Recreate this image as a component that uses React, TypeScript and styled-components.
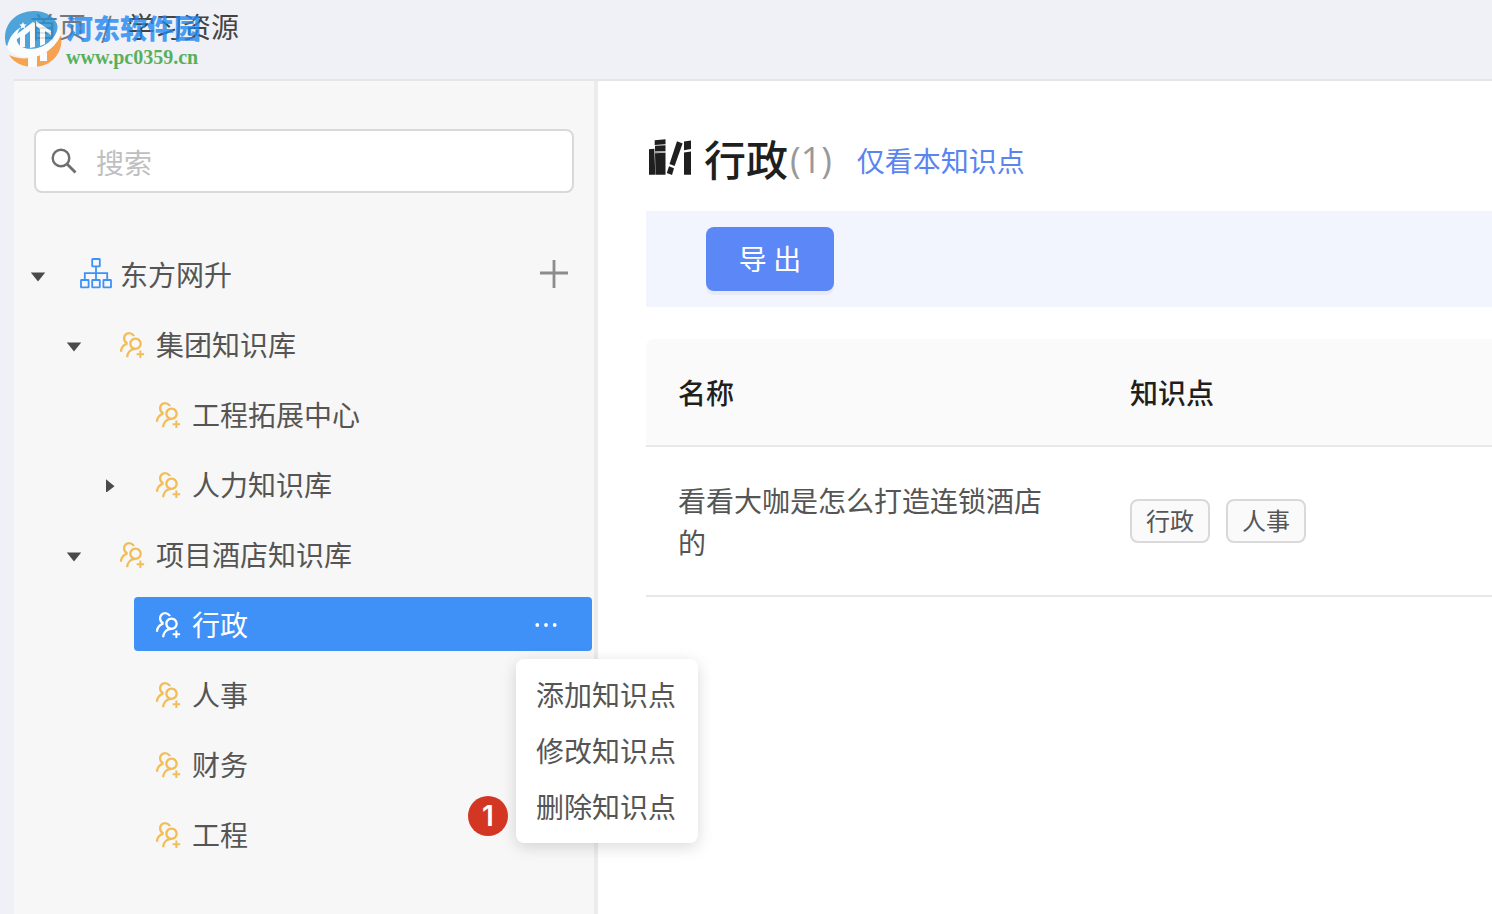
import React from 'react';
import styled, { createGlobalStyle, css } from 'styled-components';
import { AiOutlineUsergroupAdd } from 'react-icons/ai';

const GlobalStyle = createGlobalStyle`
  *, *::before, *::after { box-sizing: border-box; }
  body {
    margin: 0;
    background: #eff1f6;
    color: #555;
    font: 400 28px/42px "Noto Sans CJK SC", "Noto Sans", sans-serif;
    overflow: hidden;
  }
  button, input { font: inherit; color: inherit; }
  button { border: 0; background: none; padding: 0; cursor: pointer; }
  ul, ol { list-style: none; margin: 0; padding: 0; }
  a { color: inherit; text-decoration: none; }
  h1 { margin: 0; }
`;

const Page = styled.div`
  position: relative;
  display: flex;
  flex-direction: column;
  min-height: 100vh;
  padding-left: 14px;
`;

const Header = styled.header`
  height: 81px;
  padding: 5px 16px 0;
  border-bottom: 2px solid #e4e5e9;
`;

const Crumbs = styled.ol`
  display: flex;
  gap: 15px;
  color: #444;
`;

const Crumb = styled.li<{ $muted?: boolean }>`
  color: ${(p) => (p.$muted ? '#777' : 'inherit')};
`;

const Watermark = styled.div`
  position: absolute;
  top: 9px;
  left: 4px;
  display: flex;
  gap: 2px;
  pointer-events: none;
  opacity: 0.8;
`;

const WatermarkText = styled.div`
  display: flex;
  flex-direction: column;
`;

const WatermarkName = styled.span`
  color: #1f88f0;
  font-size: 27px;
  font-weight: 900;
  line-height: 38px;
`;

const WatermarkUrl = styled.span`
  color: #34a034;
  font: 700 20px/20px "Liberation Serif", serif;
`;

const Body = styled.div`
  display: flex;
  flex: 1;
`;

const Sidebar = styled.aside`
  flex: 0 0 584px;
  padding: 48px 0 40px;
  background: #f7f7f7;
  border-right: 4px solid #ececec;
`;

const SearchBox = styled.label`
  display: flex;
  align-items: center;
  gap: 18px;
  height: 64px;
  margin: 0 20px 54px;
  padding: 0 14px;
  background: #fff;
  border: 2px solid #d9d9d9;
  border-radius: 8px;
`;

const SearchInput = styled.input`
  flex: 1;
  min-width: 0;
  padding: 2px 0 0;
  border: 0;
  outline: 0;
  background: none;
  &::placeholder { color: #bfbfbf; opacity: 1; }
`;

const Tree = styled.ul`
  display: flex;
  flex-direction: column;
  gap: 16px;
  padding-left: 12px;
`;

const Branch = styled(Tree)`
  margin-top: 16px;
  padding-left: 36px;
`;

const Row = styled.div`
  display: flex;
  align-items: center;
  gap: 12px;
  padding-right: 2px;
`;

const Caret = styled.button`
  display: flex;
  flex: 0 0 24px;
  align-items: center;
  justify-content: center;
  height: 24px;
`;

const CaretSpace = styled.span`
  flex: 0 0 24px;
`;

const Node = styled.div<{ $selected?: boolean }>`
  position: relative;
  display: flex;
  flex: 1;
  align-items: center;
  gap: 8px;
  height: 54px;
  padding: 0 24px 0 18px;
  border-radius: 4px;
  ${(p) => p.$selected && css`
    padding-right: 32px;
    color: #fff;
    background: #3f90f7;
  `}
`;

const NodeIcon = styled.span<{ $color: string }>`
  display: flex;
  flex: 0 0 32px;
  justify-content: center;
  color: ${(p) => p.$color};
`;

const NodeName = styled.span`
  flex: 1;
`;

const IconButton = styled.button`
  display: flex;
  align-items: center;
  justify-content: center;
  width: 28px;
  height: 28px;
`;

const Menu = styled.ul`
  position: absolute;
  top: 62px;
  right: -106px;
  z-index: 2;
  padding: 8px 0;
  color: #555;
  background: #fff;
  border-radius: 8px;
  box-shadow: 0 4px 16px rgba(0, 0, 0, 0.15);
`;

const MenuItem = styled.button`
  display: block;
  padding: 6px 22px 8px 20px;
`;

const StepBadge = styled.span`
  position: absolute;
  right: 190px;
  bottom: 7px;
  width: 40px;
  height: 40px;
  border-radius: 50%;
  color: #fff;
  background: #d33724;
  font-family: Inter, sans-serif;
  font-weight: 600;
  line-height: 40px;
  text-align: center;
`;

const Main = styled.main`
  flex: 1;
  min-width: 0;
  padding: 48px 0 40px 48px;
  background: #fff;
`;

const TitleRow = styled.div`
  display: flex;
  align-items: center;
  height: 64px;
  margin-bottom: 18px;
`;

const Title = styled.h1`
  margin: 0 2px 0 10px;
  padding-bottom: 6px;
  color: #1f1f1f;
  font-size: 42px;
  font-weight: 500;
  line-height: 58px;
`;

const Count = styled.span`
  margin-right: 25px;
  padding-bottom: 2px;
  color: #999;
  font-family: "Open Sans", sans-serif;
  font-size: 36px;
`;

const OnlyLink = styled.a`
  padding-bottom: 2px;
  color: #5b84f0;
`;

const Toolbar = styled.div`
  display: flex;
  margin-bottom: 32px;
  padding: 16px 60px;
  background: #f2f5fd;
`;

const PrimaryButton = styled.button`
  min-width: 128px;
  padding: 10px 32px 12px;
  color: #fff;
  background: #5b87f7;
  border-radius: 8px;
  box-shadow: 0 4px 0 rgba(0, 0, 0, 0.04);
`;

const Table = styled.table`
  width: 100%;
  table-layout: fixed;
  border-collapse: separate;
  border-spacing: 0;
`;

const Th = styled.th<{ $name?: boolean }>`
  width: ${(p) => (p.$name ? '452px' : 'auto')};
  padding: 32px;
  color: #1f1f1f;
  background: #fafafa;
  border-bottom: 2px solid #e8e8e8;
  font-weight: 500;
  text-align: left;
  &:first-child { border-top-left-radius: 8px; }
`;

const Td = styled.td`
  padding: 32px;
  border-bottom: 2px solid #e8e8e8;
`;

const Tags = styled.div`
  display: flex;
  gap: 16px;
`;

const Tag = styled.span`
  padding: 0 14px 2px;
  background: #fafafa;
  border: 2px solid #d9d9d9;
  border-radius: 8px;
  font-size: 24px;
  line-height: 38px;
`;

const SearchIcon = () => (
  <svg width="28" height="28" viewBox="0 0 28 28" fill="none" stroke="#6e6e6e" strokeWidth="2.4" aria-hidden="true">
    <circle cx="11" cy="11" r="8.300" />
    <path d="M17 17 25.500 25.500" strokeWidth="2.800" />
  </svg>
);

const OrgIcon = () => (
  <svg width="32" height="32" viewBox="0 0 32 32" fill="none" stroke="currentColor" strokeWidth="1.8" aria-hidden="true">
    <rect x="12.200" y="1" width="7.600" height="7.400" rx=".5" />
    <rect x="1" y="22" width="7.600" height="7.400" rx=".5" />
    <rect x="12.200" y="22" width="7.600" height="7.400" rx=".5" />
    <rect x="23.400" y="22" width="7.600" height="7.400" rx=".5" />
    <path d="M16 8.400V22M4.800 22V15.200H27.200V22" />
  </svg>
);

const PlusIcon = () => (
  <svg width="28" height="28" viewBox="0 0 28 28" stroke="#8c8c8c" strokeWidth="2.8" aria-hidden="true">
    <path d="M0 13H28M14 0V28" />
  </svg>
);

const MoreIcon = () => (
  <svg width="28" height="28" viewBox="0 0 28 28" fill="currentColor" aria-hidden="true">
    <circle cx="5.300" cy="15" r="1.900" />
    <circle cx="14" cy="15" r="1.900" />
    <circle cx="22.700" cy="15" r="1.900" />
  </svg>
);

const CaretIcon = ({ open }: { open: boolean }) => (
  <svg width="16" height="16" viewBox="0 0 16 16" fill="#4a4a4a" aria-hidden="true">
    <path d={open ? 'M.8 6.500H15.200L8 15.500Z' : 'M4 3.200V16.800L12.500 10.200Z'} />
  </svg>
);

const GroupIcon = styled(AiOutlineUsergroupAdd)`
  width: 32px;
  height: 34px;
  padding-top: 2px;
`;

const BooksIcon = () => (
  <svg width="48" height="44" viewBox="0 0 48 44" fill="#1f1f1f" aria-hidden="true">
    <path d="M3 10.200 8.300 9.800 9.300 35.800H3Z" />
    <path d="M8.700 1.200 19.500.2V5.200L8.700 6Z" />
    <path d="M9 6.800 19.500 6.200V12L9 12.400Z" />
    <path d="M9 14.200 19.500 13.800V35.800H9.500Z" />
    <path d="M9 12.600 19.500 12.200V13.500L9 14Z" fill="#999" />
    <path d="M31 2.200 36.600 4.500 28.600 27 23.500 25Z" />
    <path d="M23 27.200 28 29.200 26 36 20.800 34Z" />
    <path d="M38 2.600 45 1.400V10L38 11.300Z" />
    <path d="M38 13.400 45 12.600V35.800H38Z" />
  </svg>
);

const WatermarkLogo = () => (
  <svg width="60" height="60" viewBox="0 0 60 60" aria-hidden="true">
    <path d="M2 36C-3 17 11 2 30 2 42 2 50 8 53 15 56 26 48 36 36 41 24 46 10 43 2 36Z" fill="#2590d4" />
    <path d="M3 38C5 29 9 23 17 18 11 26 11 34 18 38 31 44 51 35 54 18 59 24 56 33 47 41 34 51 8 51 3 38Z" fill="#fff" />
    <path d="M9 28 29 13 31 14V38L26 39V22L21 26V38H16V28L9 33Z" fill="#fff" />
    <path d="M32 12 47 22V26L41 22V35L36 37V20L32 17Z" fill="#fff" />
    <path d="M5 46C22 54 47 48 57 26 60 44 47 58 30 58 19 58 10 54 5 46Z" fill="#f88f28" />
    <path d="M24 49 33 47V58H24ZM36 46 43 43V52H36Z" fill="#fff" />
    <path d="m19 13 1 2.300 2.500.3-1.800 1.700.4 2.500-2.100-1.200-2.200 1.200.4-2.500-1.800-1.700 2.500-.3Z" fill="#fff" />
  </svg>
);

interface TreeNode {
  name: string;
  root?: boolean;
  open?: boolean;
  selected?: boolean;
  children?: TreeNode[];
}

const nodes: TreeNode[] = [
  {
    name: '东方网升',
    root: true,
    open: true,
    children: [
      {
        name: '集团知识库',
        open: true,
        children: [{ name: '工程拓展中心' }, { name: '人力知识库', open: false }],
      },
      {
        name: '项目酒店知识库',
        open: true,
        children: [{ name: '行政', selected: true }, { name: '人事' }, { name: '财务' }, { name: '工程' }],
      },
    ],
  },
];

const actions = ['添加知识点', '修改知识点', '删除知识点'];

function NodeMenu() {
  return (
    <Menu>
      {actions.map((action, i) => (
        <li key={action}>
          <MenuItem type="button">{action}</MenuItem>
          {i === actions.length - 1 && <StepBadge>1</StepBadge>}
        </li>
      ))}
    </Menu>
  );
}

function TreeItem({ node }: { node: TreeNode }) {
  const iconColor = node.root ? '#3f90f7' : node.selected ? '#fff' : '#f2bd57';
  return (
    <li>
      <Row>
        {node.open === undefined ? <CaretSpace /> : (
          <Caret type="button" aria-label={node.name} aria-expanded={node.open}>
            <CaretIcon open={node.open} />
          </Caret>
        )}
        <Node $selected={node.selected}>
          <NodeIcon $color={iconColor}>
            {node.root ? <OrgIcon /> : <GroupIcon />}
          </NodeIcon>
          <NodeName>{node.name}</NodeName>
          {node.root && <IconButton type="button" aria-label="添加"><PlusIcon /></IconButton>}
          {node.selected && <IconButton type="button" aria-label="更多"><MoreIcon /></IconButton>}
          {node.selected && <NodeMenu />}
        </Node>
      </Row>
      {node.children && (
        <Branch>
          {node.children.map((child) => <TreeItem key={child.name} node={child} />)}
        </Branch>
      )}
    </li>
  );
}

export default function App() {
  return (
    <>
      <GlobalStyle />
      <Page>
        <Header>
          <nav>
            <Crumbs>
              <Crumb $muted><a href="#home">首页</a></Crumb>
              <Crumb $muted>/</Crumb>
              <Crumb>学习资源</Crumb>
            </Crumbs>
          </nav>
        </Header>
        <Body>
          <Sidebar>
            <SearchBox>
              <SearchIcon />
              <SearchInput type="text" placeholder="搜索" aria-label="搜索" />
            </SearchBox>
            <Tree>
              {nodes.map((node) => <TreeItem key={node.name} node={node} />)}
            </Tree>
          </Sidebar>
          <Main>
            <TitleRow>
              <BooksIcon />
              <Title>行政</Title>
              <Count>(1)</Count>
              <OnlyLink href="#only">仅看本知识点</OnlyLink>
            </TitleRow>
            <Toolbar>
              <PrimaryButton type="button">导 出</PrimaryButton>
            </Toolbar>
            <Table>
              <thead>
                <tr>
                  <Th $name>名称</Th>
                  <Th>知识点</Th>
                </tr>
              </thead>
              <tbody>
                <tr>
                  <Td>看看大咖是怎么打造连锁酒店的</Td>
                  <Td>
                    <Tags>
                      <Tag>行政</Tag>
                      <Tag>人事</Tag>
                    </Tags>
                  </Td>
                </tr>
              </tbody>
            </Table>
          </Main>
        </Body>
        <Watermark>
          <WatermarkLogo />
          <WatermarkText>
            <WatermarkName>河东软件园</WatermarkName>
            <WatermarkUrl>www.pc0359.cn</WatermarkUrl>
          </WatermarkText>
        </Watermark>
      </Page>
    </>
  );
}
